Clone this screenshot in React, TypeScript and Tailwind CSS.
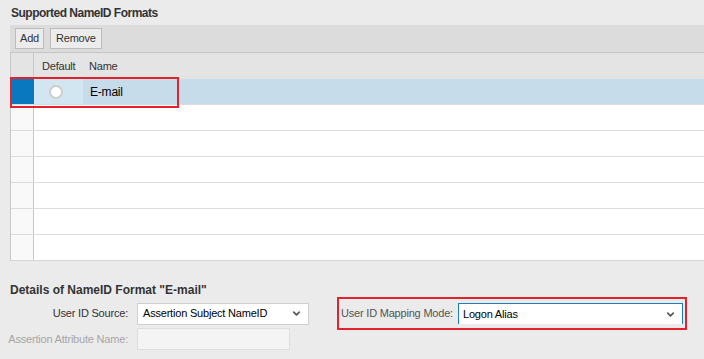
import { ChevronDown } from 'lucide-react';

const emptyRows = [1, 2, 3, 4, 5, 6];

function Chevron() {
  return <ChevronDown className="w-[11px] h-[11px] text-[#555]" strokeWidth={3.5} />;
}

export default function App() {
  return (
    <div
      className="relative w-[704px] h-[359px] bg-[#ebebeb] text-[11px] tracking-[-0.2px] text-[#333] overflow-hidden whitespace-nowrap"
      style={{ fontFamily: '"Liberation Sans", Arial, sans-serif' }}
    >
      <div className="h-[25px] pl-[11px] flex items-center font-bold text-[12px] tracking-[-0.5px] text-[#333]">
        Supported NameID Formats
      </div>

      {/* table */}
      <div className="ml-[10px]">
        <div className="h-[28px] bg-[#dcdcdc] border-b border-[#c6c6c6] flex items-center gap-[6px] pl-[5px]">
          <button className="h-[21px] px-[4px] bg-[#ececec] border border-[#bcbcbc] text-[#333]">Add</button>
          <button className="h-[21px] px-[5px] bg-[#ececec] border border-[#bcbcbc] text-[#333]">Remove</button>
        </div>
        <div className="border-l border-[#c8c8c8] border-b border-b-[#d6d6d6]">
          <div className="h-[26px] flex bg-[#e4e4e4]">
            <div className="w-[23px] border-r border-[#c8c8c8]" />
            <div className="w-[49px] pl-[8px] flex items-center text-[#333]">Default</div>
            <div className="flex-1 pl-[6px] flex items-center text-[#333]">Name</div>
          </div>
          <div className="h-[26px] flex bg-[#c6dcea] border-b border-[#dcdcdc]">
            <div className="w-[23px] bg-[#0a78be]" />
            <div className="w-[49px] bg-[#d2e6f2] flex items-center pl-[15px]">
              <div className="w-[14px] h-[14px] rounded-full bg-white border-2 border-[#cdcdcd]" />
            </div>
            <div className="flex-1 pl-[7px] flex items-center text-[12px] text-[#000]">E-mail</div>
          </div>
          {emptyRows.map((r) => (
            <div key={r} className="h-[26px] flex bg-white border-b border-[#dcdcdc] last:border-b-0 last:h-[25px]">
              <div className="w-[23px] bg-[#f9f9f9] border-r border-[#c8c8c8]" />
              <div className="flex-1" />
            </div>
          ))}
        </div>
      </div>

      {/* details */}
      <div className="mt-[22px] pl-[10px] font-bold text-[12px] tracking-normal text-[#333] h-[14px] leading-[14px]">
        Details of NameID Format "E-mail"
      </div>
      <div className="flex items-center">
        <div className="w-[128px] text-right text-[#333]">User ID Source:</div>
        <div className="ml-[9px] w-[172px] h-[22px] bg-white border border-[#cfcfcf] flex items-center justify-between pl-[5px] pr-[6px] text-[#000]">
          <span>Assertion Subject NameID</span>
          <Chevron />
        </div>
        <div className="ml-[28px] w-[350px] h-[33px] border-2 border-[#e4222c] flex items-center pl-[2px]">
          <div className="w-[117px] text-[#555]">User ID Mapping Mode:</div>
          <div className="w-[225px] h-[21px] bg-white border border-b-0 border-[#1a7ec0] flex items-center justify-between pl-[4px] pr-[6px] text-[#000]">
            <span>Logon Alias</span>
            <Chevron />
          </div>
        </div>
      </div>
      <div className="flex items-center -mt-[2px]">
        <div className="w-[128px] text-right text-[#a6a6a6]">Assertion Attribute Name:</div>
        <div className="ml-[9px] w-[153px] h-[22px] bg-[#f4f4f4] border border-[#dedede]" />
      </div>

      {/* highlight of selected row */}
      <div className="absolute left-[10px] top-[77px] w-[169px] h-[31px] border-2 border-[#e4222c] pointer-events-none" />
    </div>
  );
}
